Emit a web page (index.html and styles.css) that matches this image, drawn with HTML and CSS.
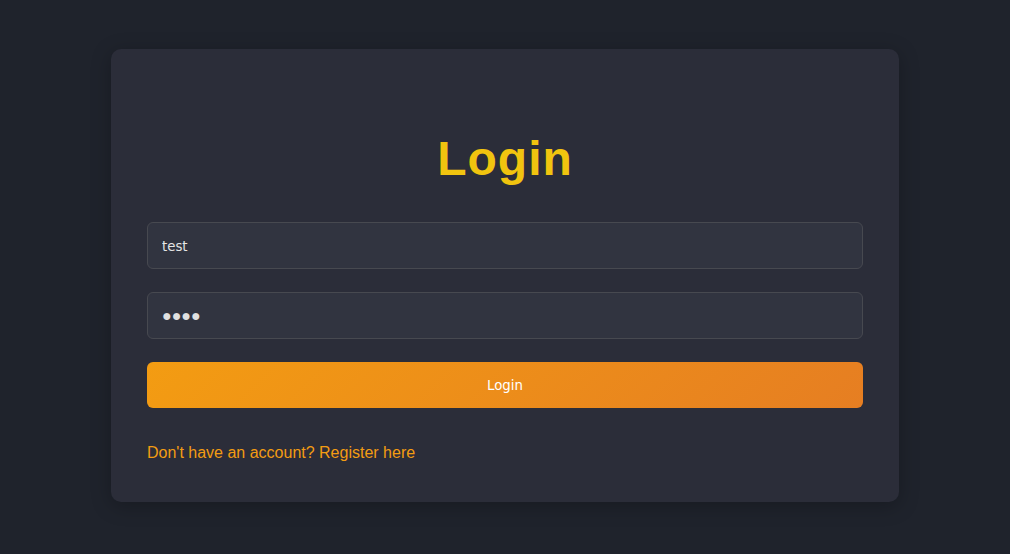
FILE: index.html
```html
<!DOCTYPE html>
<html lang="en">
<head>
<meta charset="utf-8">
<title>Login</title>
<link rel="stylesheet" href="styles.css">
</head>
<body>
<main class="page">
  <section class="card">
    <h1 class="title">Login</h1>
    <form class="form">
      <input class="field" type="text" value="test">
      <input class="field masked" type="text" value="●●●●" aria-label="Password">
      <button class="btn" type="button">Login</button>
    </form>
    <p class="foot"><a class="link" href="#">Don't have an account? Register here</a></p>
  </section>
</main>
</body>
</html>
```
FILE: styles.css
```css
html, body {
  margin: 0;
  padding: 0;
  background: #1f232c;
  height: 100%;
}
body {
  font-family: "Liberation Sans", Arial, sans-serif;
}
.page {
  display: flex;
  justify-content: center;
  padding-top: 49px;
}
.card {
  width: 788px;
  box-sizing: border-box;
  background: #2b2d39;
  border-radius: 10px;
  padding: 82px 36px 40px;
  box-shadow: 0 4px 20px rgba(0, 0, 0, 0.25);
}
.title {
  margin: 0 0 36px;
  text-align: center;
  color: #f1c40f;
  font-size: 48px;
  font-weight: bold;
  letter-spacing: 1px;
  line-height: 55px;
}
.form {
  display: flex;
  flex-direction: column;
  gap: 23px;
}
.field {
  height: 47px;
  box-sizing: border-box;
  background: #313440;
  border: 1px solid #474950;
  border-radius: 6px;
  padding: 1px 14px 0;
  color: #e6e6e6;
  font-family: "DejaVu Sans", sans-serif;
  font-size: 13.333px;
  outline: none;
}
.masked {
  font-family: "Liberation Sans", sans-serif;
  font-size: 16px;
  color: #e0e0e0;
}
.btn {
  height: 46px;
  border: none;
  border-radius: 6px;
  background: linear-gradient(135deg, #f39c12, #e67e22);
  color: #ffffff;
  font-family: "DejaVu Sans", sans-serif;
  font-size: 13.333px;
}
.foot {
  margin: 36px 0 0;
  font-size: 16px;
  line-height: 18px;
}
.link {
  color: #f39c12;
  text-decoration: none;
}
```
